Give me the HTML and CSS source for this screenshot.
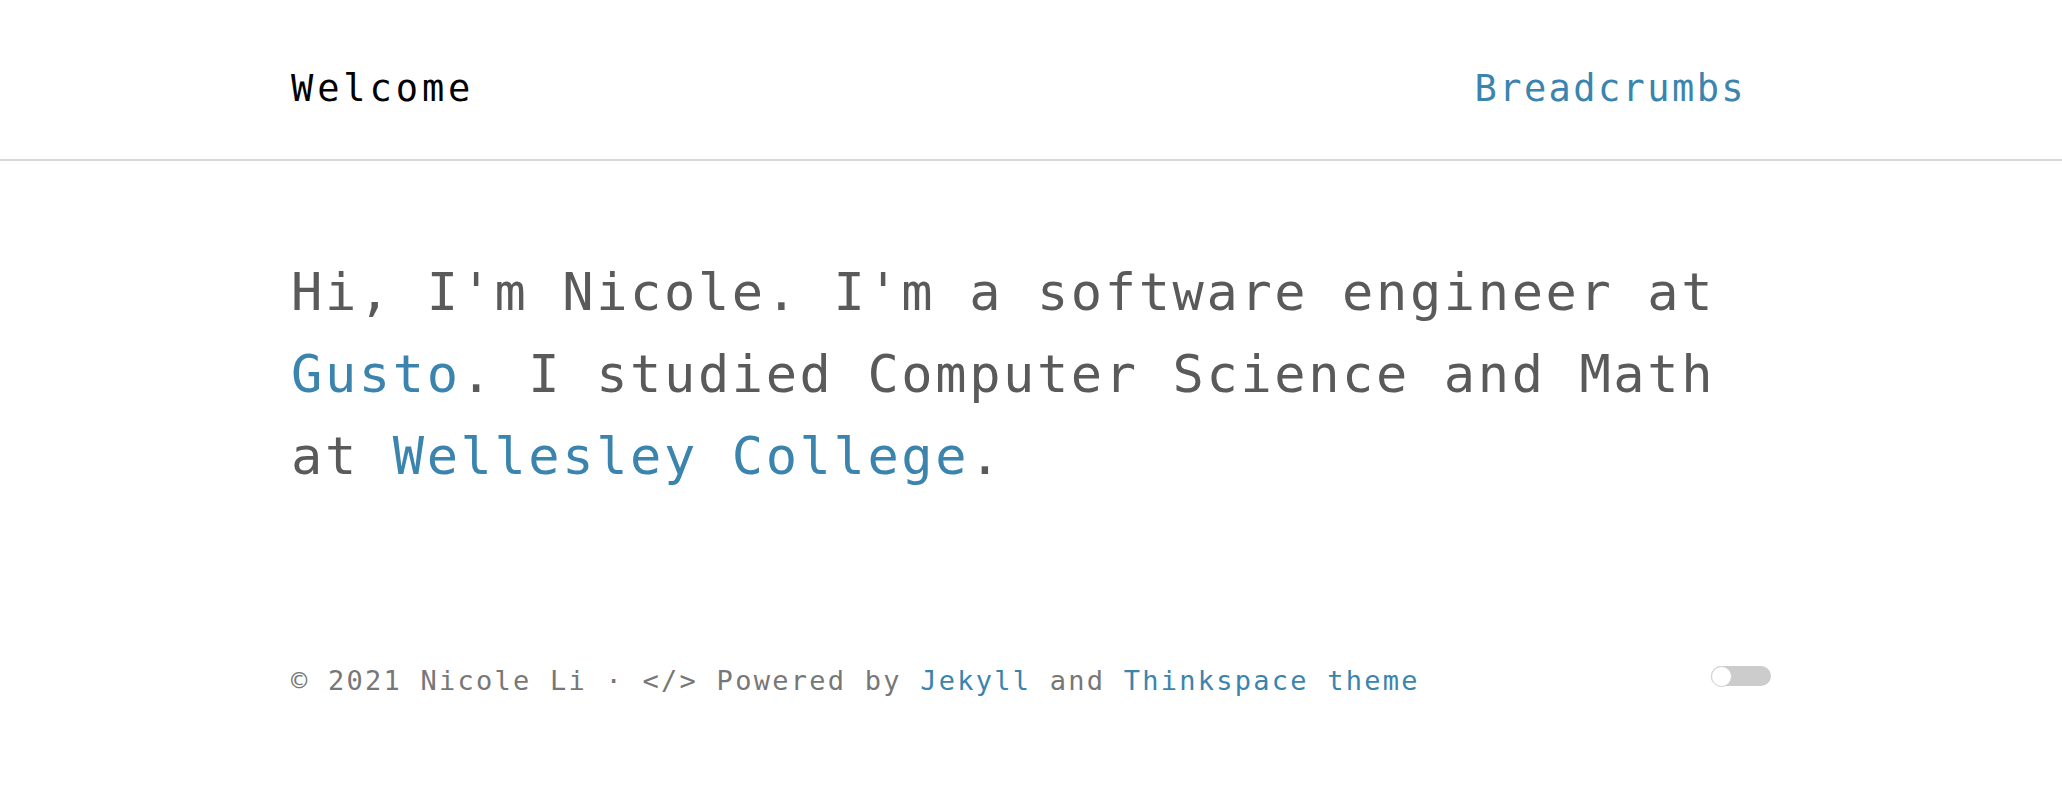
FILE: index.html
```html
<!DOCTYPE html>
<html lang="en">
<head>
<meta charset="utf-8">
<title>Welcome</title>
<link rel="stylesheet" href="styles.css">
</head>
<body>
<header class="site-header">
  <div class="wrap header-inner">
    <a class="site-title" href="#">Welcome</a>
    <nav class="site-nav"><a class="nav-link" href="#">Breadcrumbs</a></nav>
  </div>
</header>
<main class="wrap content">
  <p class="intro">Hi, I'm Nicole. I'm a software engineer at <a class="link" href="#">Gusto</a>. I studied Computer Science and Math at <a class="link" href="#">Wellesley College</a>.</p>
</main>
<footer class="wrap site-footer">
  <p class="footer-text">© 2021 Nicole Li · &lt;/&gt; Powered by <a class="link" href="#">Jekyll</a> and <a class="link" href="#">Thinkspace theme</a></p>
  <div class="toggle" role="switch" aria-checked="false"><span class="knob"></span></div>
</footer>
</body>
</html>
```

FILE: styles.css
```css
html, body {
  margin: 0;
  padding: 0;
  background: #ffffff;
}

body {
  font-family: "DejaVu Sans Mono", "Liberation Mono", monospace;
  color: #5a5a5a;
}

a {
  text-decoration: none;
}

.wrap {
  width: 1480px;
  margin: 0 auto;
  box-sizing: border-box;
}

.site-header {
  border-bottom: 2px solid #d8d8d8;
}

.header-inner {
  display: flex;
  justify-content: space-between;
  align-items: flex-start;
  padding-top: 67px;
  padding-bottom: 48px;
}

.site-title {
  font-size: 37px;
  line-height: 44px;
  letter-spacing: 3.9px;
  color: #000000;
}

.site-nav {
  padding-right: 25px;
}

.nav-link {
  font-size: 37px;
  line-height: 44px;
  letter-spacing: 2.4px;
  color: #3b84ae;
}

.content {
  padding-top: 90px;
}

.intro {
  margin: 0;
  font-size: 52px;
  line-height: 82px;
  letter-spacing: 2.6px;
  color: #5a5a5a;
}

.link {
  color: #3b84ae;
}

.site-footer {
  display: flex;
  justify-content: space-between;
  align-items: flex-start;
  padding-top: 164px;
  padding-bottom: 87px;
}

.footer-text {
  margin: 0;
  font-size: 27px;
  line-height: 40px;
  letter-spacing: 2.25px;
  color: #777777;
}

.toggle {
  position: relative;
  width: 60px;
  height: 20px;
  margin-top: 5px;
  border-radius: 10px;
  background: #cccccc;
}

.knob {
  position: absolute;
  left: 0;
  top: 0;
  width: 19px;
  height: 19px;
  border-radius: 50%;
  background: #ffffff;
  border: 1px solid #d0d0d0;
  box-sizing: content-box;
  margin-top: -0.5px;
}
```
